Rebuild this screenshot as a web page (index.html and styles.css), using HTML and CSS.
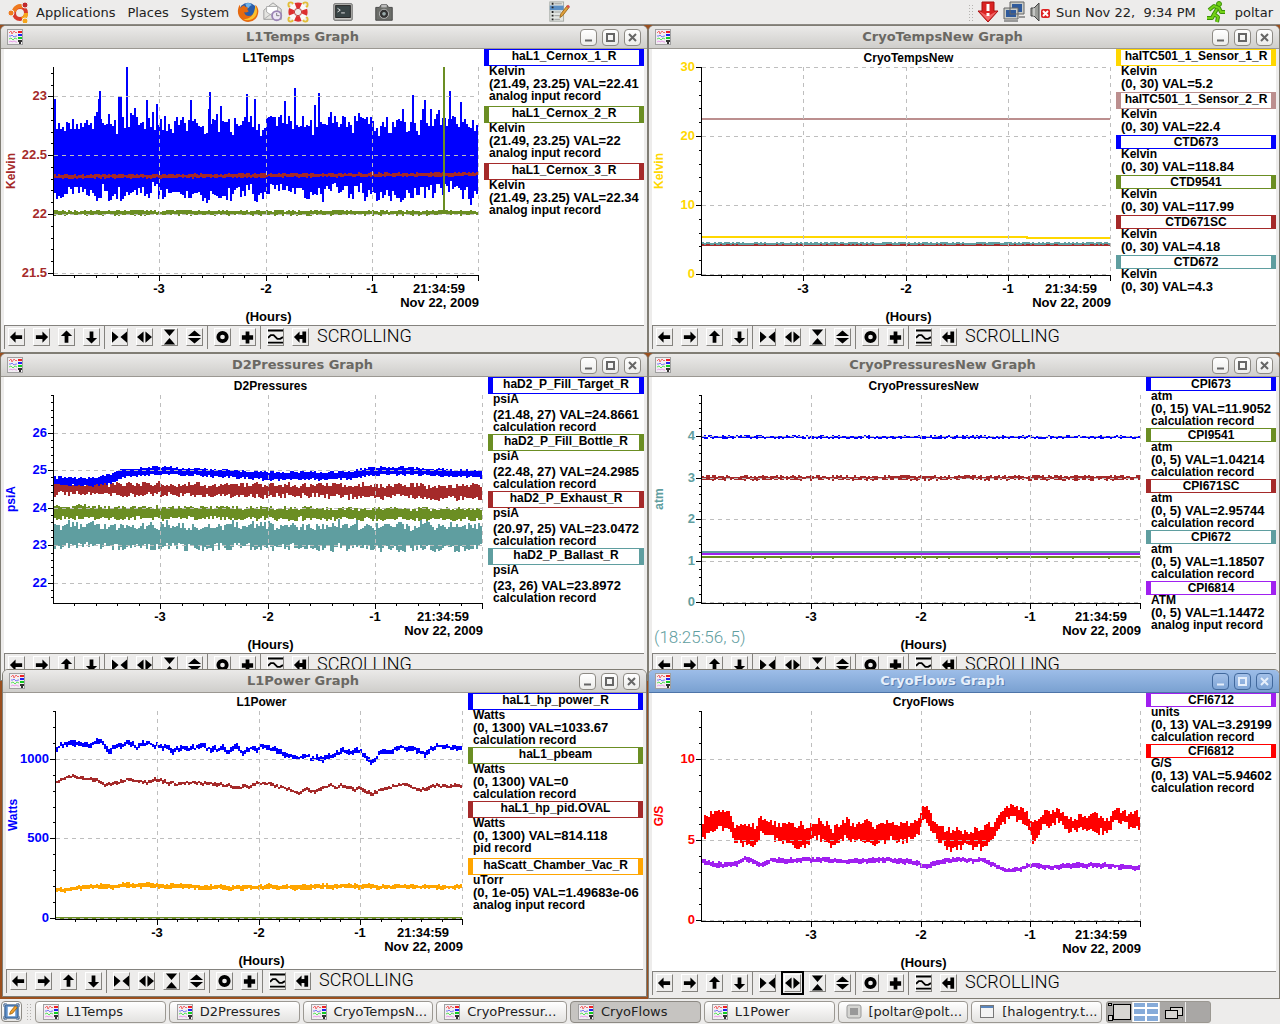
FILE: index.html
```html
<!DOCTYPE html>
<html lang="en">
<head>
    <meta charset="UTF-8">
    <meta name="viewport" content="width=device-width, initial-scale=1.0">
    <title>poltar desktop</title>
    <link rel="stylesheet" href="styles.css">
</head>
<body>

    <!-- shared icons -->
    <svg class="sprites" aria-hidden="true">
        <symbol id="i-app" viewBox="0 0 16 16">
            <rect x=".5" y=".5" width="15" height="15" fill="#f2eef2" stroke="#a0a0a0"/>
            <path d="M2 4l2-2 1 3 2-3 2 2 1-1" fill="none" stroke="#f46a6a"/>
            <path d="M2 7h2l1-1 2 2 2-1h1" fill="none" stroke="#7a7af5"/>
            <path d="M2 10l2-1 2 2 2-2 2 1" fill="none" stroke="#5de65d"/>
            <path d="M2 13l2-1 1 1 2-1 2 1h1" fill="none" stroke="#e9a0e9"/>
            <path d="M11 2h4v2h-4z" fill="#e22"/>
            <path d="M11 5h4v2h-4z" fill="#22e"/>
            <path d="M11 8h4v2h-4z" fill="#1c2"/>
            <path d="M11 11h4v2h-1v2h-2v-2h-1z" fill="#333"/>
        </symbol>
        <symbol id="i-left" viewBox="0 0 16 16"><path d="M1 8l6-6v4h7v4H7v4z"/></symbol>
        <symbol id="i-right" viewBox="0 0 16 16"><path d="M15 8L9 2v4H2v4h7v4z"/></symbol>
        <symbol id="i-up" viewBox="0 0 16 16"><path d="M8 1l6 6h-4v7H6V7H2z"/></symbol>
        <symbol id="i-down" viewBox="0 0 16 16"><path d="M8 15L2 9h4V2h4v7h4z"/></symbol>
        <symbol id="i-xin" viewBox="0 0 16 16"><path d="M0 2l7 6-7 6zM16 2L9 8l7 6z"/></symbol>
        <symbol id="i-xout" viewBox="0 0 16 16"><path d="M7 2v12L0 8zM9 2v12l7-6z"/></symbol>
        <symbol id="i-yin" viewBox="0 0 16 16"><path d="M2 0h12L8 7zM2 16h12L8 9z"/></symbol>
        <symbol id="i-yout" viewBox="0 0 16 16"><path d="M1 7h14L8 1zM1 9h14l-7 6z"/></symbol>
        <symbol id="i-ring" viewBox="0 0 16 16"><circle cx="8" cy="8" r="4.5" fill="none" stroke="#000" stroke-width="4"/></symbol>
        <symbol id="i-plus" viewBox="0 0 16 16"><path d="M6 2h4v4h4v5h-4v4H6v-4H2V6h4z"/></symbol>
        <symbol id="i-auto" viewBox="0 0 16 16"><path d="M0 0h16v2H0zM0 13h16v2H0z"/><path d="M0 9l3-3h3l4 4h3l3-2" fill="none" stroke="#000" stroke-width="2"/></symbol>
        <symbol id="i-reset" viewBox="0 0 16 16"><path d="M1 8l6-6v4h3V2h4v12h-4v-4H7v4z"/><path d="M7 6h4v4H7z"/></symbol>
    </svg>

    <header class="panel panel-top">
        <svg class="pic logo" viewBox="0 0 22 22">
            <circle cx="12" cy="12" r="6" fill="none" stroke="#d8392b" stroke-width="4"/>
            <path d="M6 11a6 6 0 0 1 9-5" fill="none" stroke="#ef7a1e" stroke-width="4"/>
            <path d="M18 12a6 6 0 0 1-4 6" fill="none" stroke="#f6a61c" stroke-width="4"/>
            <g stroke="#edeceb"><circle cx="3" cy="12" r="3" fill="#ef7a1e"/><circle cx="17" cy="4" r="3" fill="#c0282d"/><circle cx="17" cy="20" r="3" fill="#f6a61c"/></g>
        </svg>
        <nav class="menu">
            <button>Applications</button>
            <button>Places</button>
            <button>System</button>
        </nav>
        <div class="launchers">
            <svg class="pic" viewBox="0 0 24 24">
                <circle cx="12" cy="12" r="10" fill="#2a5ca8"/>
                <path d="M9 3c4-2 7 0 7 2-3 0-2 3-5 3z" fill="#6fb3ea"/>
                <path d="M3 4C0 9 0 16 5 20c5 5 14 3 17-3 2-5 2-9-2-13 1 5 1 9-3 11-4 3-9 1-9-3 2 1 4 0 5-1-2-1-2-2-1-4-2 0-3 0-4-2C6 5 5 6 4 8z" fill="#e66a10"/>
                <path d="M20 5c3 5 2 10-1 13-3 3-8 4-12 2 7 0 12-4 13-15z" fill="#fbc02d"/>
            </svg>
            <svg class="pic" viewBox="0 0 24 24">
                <path d="M2 10L12 2l9 7v11H2z" fill="#e4e4e1" stroke="#999"/>
                <path d="M5 6h12v7l-6 3-6-4z" fill="#fff" stroke="#aaa"/>
                <path d="M2 20l8-6 11 6" fill="none" stroke="#aaa"/>
                <circle cx="16" cy="16" r="5" fill="#eee8f5" stroke="#9b85b5" stroke-width="2"/>
                <path d="M16 13v3h3" fill="none" stroke="#777"/>
            </svg>
            <svg class="pic" viewBox="0 0 24 24">
                <g fill="none" stroke="#e2bd38" stroke-width="2"><circle cx="4" cy="4" r="2.5"/><circle cx="20" cy="4" r="2.5"/><circle cx="4" cy="20" r="2.5"/><circle cx="20" cy="20" r="2.5"/></g>
                <circle cx="12" cy="12" r="7.5" fill="none" stroke="#fafafa" stroke-width="6"/>
                <circle cx="12" cy="12" r="7.5" fill="none" stroke="#dd3030" stroke-width="6" stroke-dasharray="6 5.8" stroke-dashoffset="3"/>
                <circle cx="12" cy="12" r="4" fill="#edeceb" stroke="#b33"/>
            </svg>
            <svg class="pic terminal" viewBox="0 0 24 24">
                <rect x="2" y="3" width="20" height="18" rx="1" fill="#c8c8c4" stroke="#555"/>
                <rect x="4" y="5" width="16" height="13" fill="#3a4546" stroke="#222"/>
                <path d="M6 8l3 2-3 2M10 13h4" fill="none" stroke="#eee"/>
            </svg>
            <svg class="pic camera" viewBox="0 0 24 24">
                <path d="M3 7h4l2-3h6l2 3h4v14H3z" fill="#6b6d69" stroke="#444"/>
                <path d="M9 4h6v3H9z" fill="#bbb"/>
                <circle cx="12" cy="14" r="5" fill="#333" stroke="#bbb"/>
                <circle cx="12" cy="14" r="2" fill="#9aa"/>
            </svg>
            <svg class="pic notes" viewBox="0 0 24 24">
                <rect x="2" y="1" width="15" height="21" fill="#e2e5e2" stroke="#a3a8a3"/>
                <path d="M2 5h15v5H2z" fill="#5c8fc4"/>
                <path d="M4 3h2M4 7h2M4 12h2M4 16h2M4 20h2" stroke="#222" stroke-width="2"/>
                <path d="M7 3h8M7 12h7M7 16h6M7 20h6" stroke="#999"/>
                <path d="M13 18l1-4 7-9 2 2-7 9z" fill="#e0a03c" stroke="#9a6a20"/>
                <path d="M20 6l2-2 2 2-2 2z" fill="#d9534f"/>
            </svg>
        </div>
        <div class="tray">
            <span class="grip"></span>
            <svg class="pic" viewBox="0 0 22 22">
                <path d="M5 1h12v9h4L11 21 1 10h4z" fill="#d92323" stroke="#a11"/>
                <path d="M2 10l9 10 9-10-9 5z" fill="#f26565"/>
                <path d="M11 3v7M11 12v3" stroke="#fff" stroke-width="3"/>
            </svg>
            <svg class="pic" viewBox="0 0 22 22">
                <g fill="#2f5a9c" stroke="#c9ccc8" stroke-width="2"><rect x="8" y="2" width="12" height="10"/><rect x="2" y="8" width="12" height="9"/></g>
                <path d="M7 1h14v12H7zM1 7h14v11H1z" fill="none" stroke="#666"/>
                <path d="M1 20h14M16 16h6" stroke="#999" stroke-width="2"/>
            </svg>
            <svg class="pic speaker" viewBox="0 0 22 22">
                <path d="M2 7h3l5-5v18l-5-5H2z" fill="#9b9d99" stroke="#444"/>
                <path d="M5 7v8" stroke="#eee"/>
                <rect x="12" y="8" width="9" height="9" rx="2" fill="#d22"/>
                <path d="M14 10l5 5M19 10l-5 5" stroke="#fff" stroke-width="2"/>
            </svg>
            <time class="clock">Sun Nov 22,&nbsp; 9:34 PM</time>
            <svg class="pic runner" viewBox="0 0 22 22">
                <circle cx="14" cy="3" r="2.5" fill="#73d216" stroke="#3c8f0a"/>
                <path d="M4 9l5-4 5 2 2 4h4M12 8l-3 5 4 3-1 5M9 13l-2 4H2" fill="none" stroke="#3c8f0a" stroke-width="4" stroke-linejoin="round"/>
                <path d="M4 9l5-4 5 2 2 4h4M12 8l-3 5 4 3-1 5M9 13l-2 4H2" fill="none" stroke="#73d216" stroke-width="2"/>
            </svg>
            <span class="user">poltar</span>
        </div>
    </header>

    <main class="desktop">

        <section class="window w-l1temps">
            <div class="titlebar"><h2>L1Temps Graph</h2></div>
            <div class="content">
                <div class="chart" data-chart="l1temps"></div>
                <div class="legend">
                    <div class="entry blue"><h3>haL1_Cernox_1_R</h3><p>Kelvin</p><p class="value">(21.49, 23.25) VAL=22.41</p><p class="record deep">analog input record</p></div>
                    <div class="entry olive"><h3>haL1_Cernox_2_R</h3><p>Kelvin</p><p class="value">(21.49, 23.25) VAL=22</p><p class="record deep">analog input record</p></div>
                    <div class="entry brown"><h3>haL1_Cernox_3_R</h3><p>Kelvin</p><p class="value">(21.49, 23.25) VAL=22.34</p><p class="record deep">analog input record</p></div>
                </div>
            </div>
        </section>

        <section class="window right w-cryotemps">
            <div class="titlebar"><h2>CryoTempsNew Graph</h2></div>
            <div class="content">
                <div class="chart" data-chart="cryotemps"></div>
                <div class="legend">
                    <div class="entry gold"><h3>haITC501_1_Sensor_1_R</h3><p>Kelvin</p><p class="value">(0, 30) VAL=5.2</p></div>
                    <div class="entry rosy"><h3>haITC501_1_Sensor_2_R</h3><p>Kelvin</p><p class="value">(0, 30) VAL=22.4</p></div>
                    <div class="entry blue short"><h3>CTD673</h3><p>Kelvin</p><p class="value">(0, 30) VAL=118.84</p></div>
                    <div class="entry olive short"><h3>CTD9541</h3><p>Kelvin</p><p class="value">(0, 30) VAL=117.99</p></div>
                    <div class="entry brown short"><h3>CTD671SC</h3><p>Kelvin</p><p class="value">(0, 30) VAL=4.18</p></div>
                    <div class="entry cadet short"><h3>CTD672</h3><p>Kelvin</p><p class="value">(0, 30) VAL=4.3</p></div>
                </div>
            </div>
        </section>

        <section class="window row2 w-d2">
            <div class="titlebar"><h2>D2Pressures Graph</h2></div>
            <div class="content">
                <div class="chart" data-chart="d2"></div>
                <div class="legend">
                    <div class="entry blue"><h3>haD2_P_Fill_Target_R</h3><p class="deep">psiA</p><p class="value">(21.48, 27) VAL=24.8661</p><p class="record">calculation record</p></div>
                    <div class="entry olive"><h3>haD2_P_Fill_Bottle_R</h3><p class="deep">psiA</p><p class="value">(22.48, 27) VAL=24.2985</p><p class="record">calculation record</p></div>
                    <div class="entry brown"><h3>haD2_P_Exhaust_R</h3><p class="deep">psiA</p><p class="value">(20.97, 25) VAL=23.0472</p><p class="record">calculation record</p></div>
                    <div class="entry cadet"><h3>haD2_P_Ballast_R</h3><p class="deep">psiA</p><p class="value">(23, 26) VAL=23.8972</p><p class="record">calculation record</p></div>
                </div>
            </div>
        </section>

        <section class="window right row2 w-cryopress">
            <div class="titlebar"><h2>CryoPressuresNew Graph</h2></div>
            <div class="content">
                <div class="chart" data-chart="cryopress"><span class="cursor-pos">(18:25:56, 5)</span></div>
                <div class="legend">
                    <div class="entry blue short"><h3>CPI673</h3><p>atm</p><p class="value">(0, 15) VAL=11.9052</p><p class="record">calculation record</p></div>
                    <div class="entry olive short"><h3>CPI9541</h3><p>atm</p><p class="value">(0, 5) VAL=1.04214</p><p class="record">calculation record</p></div>
                    <div class="entry brown short"><h3>CPI671SC</h3><p>atm</p><p class="value">(0, 5) VAL=2.95744</p><p class="record">calculation record</p></div>
                    <div class="entry cadet short"><h3>CPI672</h3><p>atm</p><p class="value">(0, 5) VAL=1.18507</p><p class="record">calculation record</p></div>
                    <div class="entry purple short"><h3>CPI6814</h3><p>ATM</p><p class="value">(0, 5) VAL=1.14472</p><p class="record">analog input record</p></div>
                </div>
            </div>
        </section>

        <section class="window row3 w-l1power">
            <div class="titlebar"><h2>L1Power Graph</h2></div>
            <div class="content">
                <div class="chart" data-chart="l1power"></div>
                <div class="legend">
                    <div class="entry blue"><h3>haL1_hp_power_R</h3><p>Watts</p><p class="value">(0, 1300) VAL=1033.67</p><p class="record">calculation record</p></div>
                    <div class="entry olive"><h3>haL1_pbeam</h3><p>Watts</p><p class="value">(0, 1300) VAL=0</p><p class="record">calculation record</p></div>
                    <div class="entry brown"><h3>haL1_hp_pid.OVAL</h3><p>Watts</p><p class="value">(0, 1300) VAL=814.118</p><p class="record deep">pid record</p></div>
                    <div class="entry orange"><h3>haScatt_Chamber_Vac_R</h3><p>uTorr</p><p class="value">(0, 1e-05) VAL=1.49683e-06</p><p class="record">analog input record</p></div>
                </div>
            </div>
        </section>

        <section class="window right row3 active w-cryoflows">
            <div class="titlebar"><h2>CryoFlows Graph</h2></div>
            <div class="content">
                <div class="chart" data-chart="cryoflows"></div>
                <div class="legend">
                    <div class="entry purple short"><h3>CFI6712</h3><p>units</p><p class="value">(0, 13) VAL=3.29199</p><p class="record">calculation record</p></div>
                    <div class="entry red short"><h3>CFI6812</h3><p>G/S</p><p class="value">(0, 13) VAL=5.94602</p><p class="record">calculation record</p></div>
                </div>
            </div>
        </section>

    </main>

    <footer class="panel panel-bottom">
        <button class="show-desktop" aria-label="Show desktop">
            <svg viewBox="0 0 18 18"><rect x="2" y="2" width="14" height="14" rx="2" fill="#5d8fc9" stroke="#234d80"/><rect x="5" y="4" width="8" height="10" fill="#fff"/><path d="M7 12l1-3 5-6 2 2-5 6z" fill="#f0a030" stroke="#a66a10"/><path d="M1 4V1h3M14 1h3v3M1 14v3h3M14 17h3v-3" fill="none" stroke="#234d80"/></svg>
        </button>
        <span class="grip"></span>
        <div class="tasks">
            <button><svg><use href="#i-app"/></svg>L1Temps</button>
            <button><svg><use href="#i-app"/></svg>D2Pressures</button>
            <button><svg><use href="#i-app"/></svg>CryoTempsN...</button>
            <button><svg><use href="#i-app"/></svg>CryoPressur...</button>
            <button class="current"><svg><use href="#i-app"/></svg>CryoFlows</button>
            <button><svg><use href="#i-app"/></svg>L1Power</button>
            <button><svg viewBox="0 0 16 16"><rect x="1" y="1" width="14" height="13" rx="2" fill="#d5d5d2" stroke="#999"/><rect x="4" y="4" width="8" height="7" fill="#999"/></svg>[poltar@polt...</button>
            <button><svg viewBox="0 0 16 16"><rect x="1.5" y="1.5" width="13" height="12" fill="#f4f4f4" stroke="#777"/><path d="M2 2h12v2H2z" fill="#5a86bd"/></svg>[halogentry.t...</button>
        </div>
        <div class="workspaces">
            <div class="space"><i class="mini a"></i><i class="mini b"></i><i class="mini c"></i></div>
            <div class="space current"><i></i><i></i><i></i><i></i><i></i><i></i></div>
            <div class="space"><i class="mini d"></i><i class="mini e"></i></div>
            <div class="space"></div>
        </div>
    </footer>

    <script src="charts.js"></script>
</body>
</html>
```
FILE: styles.css
```css
* {
    box-sizing: border-box;
}
body {
    margin: 0;
    height: 100vh;
    display: flex;
    flex-direction: column;
    overflow: hidden;
    font-family: "DejaVu Sans", sans-serif;
    font-size: 13px;
    color: #222;
    background: #9a4f1e;
}
h2, h3, p {
    margin: 0;
}
button {
    font: inherit;
    color: inherit;
    padding: 0;
    border: 0;
    background: none;
}
.sprites {
    position: absolute;
    width: 0;
    height: 0;
}

/* panels */
.panel {
    display: flex;
    align-items: center;
    height: 25px;
    flex: none;
    background: #edeceb;
}
.panel-top {
    border-bottom: 1px solid #8d8a84;
    padding: 0 7px 0 8px;
}
.pic {
    width: 22px;
    height: 22px;
    flex: none;
}
.menu {
    display: flex;
    gap: 12px;
    margin: 0 8px 0 6px;
}
.launchers {
    display: flex;
    gap: 3px;
}
.terminal {
    margin-left: 20px;
}
.camera {
    margin-left: 16px;
}
.notes {
    margin-left: 150px;
}
.tray {
    display: flex;
    align-items: center;
    gap: 4px;
    margin-left: auto;
    white-space: nowrap;
}
.grip {
    width: 5px;
    height: 17px;
    background-image: radial-gradient(#b5b3b0 1px, transparent 1px);
    background-size: 3px 3px;
}
.clock {
    margin: 0 5px 0 1px;
}
.runner {
    margin-right: 4px;
}

/* desktop and windows */
.desktop {
    position: relative;
    flex: 1;
    background: #9a4f1e;
}
.window {
    position: absolute;
    left: 0;
    top: 0;
    width: calc(50% + 8px);
    border: 1px solid #807d74;
    border-radius: 6px 6px 0 0;
    background: #edeceb;
    overflow: hidden;
}
.window.right {
    left: calc(50% + 8px);
    width: calc(50% - 8px);
}
.window.row2 {
    top: 328px;
}
.window.row3 {
    top: 644px;
}
.w-l1power {
    left: 2px;
    width: calc(50% + 5px);
}
.titlebar {
    display: flex;
    align-items: center;
    gap: 7px;
    height: 23px;
    padding: 0 6px;
    border-bottom: 1px solid #9b9892;
    background: linear-gradient(#ebeae9, #cfcecb);
}
.titlebar h2 {
    flex: 1;
    text-align: center;
    font-size: 13px;
    line-height: 22px;
    color: #6a6863;
}
.titlebar svg {
    width: 16px;
    height: 16px;
    flex: none;
}
.titlebar button {
    width: 17px;
    height: 17px;
    margin-left: -2px;
    border: 1px solid #8d8a84;
    border-radius: 4px;
    background: linear-gradient(#fff, #ececea);
    color: #666;
}
.titlebar button svg {
    display: block;
    width: 15px;
    height: 15px;
}
.active .titlebar {
    border-color: #4d74a8;
    background: linear-gradient(#9dbde8, #7aa1d1);
}
.active .titlebar h2 {
    color: #e6effb;
    text-shadow: 1px 1px 0 #5a80b3;
}
.active .titlebar button {
    border-color: #41689c;
    background: linear-gradient(#a3c0e8, #7fa5d6);
    color: #e6effb;
}
.content {
    display: flex;
    margin: 0 3px;
    background: #fff;
}
.chart {
    position: relative;
    flex: 1;
    min-width: 0;
    height: 276px;
}
.w-cryoflows .chart {
    height: 278px;
}
.chart svg {
    display: block;
    width: 100%;
    height: 100%;
}
.chart text {
    font: bold 12px "Liberation Sans", Arial, sans-serif;
}
.chart text.num {
    font-size: 13px;
}
.cursor-pos {
    position: absolute;
    left: 2px;
    bottom: 6px;
    font: 300 17px/20px Roboto, "Liberation Sans", sans-serif;
    color: #5f9ea0;
}

/* legends */
.legend {
    width: 160px;
    flex: none;
    font: bold 12px "Liberation Sans", Arial, sans-serif;
    color: #000;
    white-space: nowrap;
}
.w-d2 .legend {
    width: 156px;
}
.w-cryopress .legend,
.w-cryoflows .legend {
    width: 130px;
}
.w-l1power .legend {
    width: 175px;
}
.entry h3 {
    height: 17px;
    border: solid;
    border-width: 1px 5px;
    font-size: 12px;
    line-height: 13px;
    text-align: center;
}
.entry.short h3 {
    height: 14px;
    line-height: 12px;
}
.entry p {
    padding-left: 5px;
    line-height: 11px;
}
.entry .value {
    font-size: 13px;
    line-height: 13px;
}
.entry .value:last-child {
    padding-bottom: 2px;
}
.entry .record {
    line-height: 13px;
}
.entry .deep {
    padding-bottom: 3px;
}
.blue h3 { border-color: #0000ff; }
.olive h3 { border-color: #6b8e23; }
.brown h3 { border-color: #a52a2a; }
.gold h3 { border-color: #ffd700; }
.rosy h3 { border-color: #bc8f8f; }
.cadet h3 { border-color: #5f9ea0; }
.purple h3 { border-color: #a020f0; }
.orange h3 { border-color: #ffa500; }
.red h3 { border-color: #ff0000; }

/* graph toolbar */
.toolbar {
    display: flex;
    height: 24px;
    margin: 0 3px 3px;
    border: solid #84827e;
    border-width: 1px 0 0 1px;
}
.toolbar .group {
    display: flex;
    gap: 8px;
    padding: 2px 4px 0 6px;
    border-right: 1px solid #84827e;
}
.toolbar .group:first-child {
    padding-left: 3px;
}
.toolbar .group:last-of-type {
    border-right: 0;
}
.toolbar button {
    width: 17px;
    height: 18px;
    border: solid;
    border-width: 1px;
    border-color: #fff #84827e #84827e #fff;
}
.toolbar button svg {
    display: block;
    width: 15px;
    height: 16px;
}
.active .toolbar button[aria-label="Expand X"] {
    outline: 2px solid #000;
    outline-offset: 1px;
}
.toolbar .status {
    padding-left: 4px;
    font: 300 18px/20px Roboto, "Liberation Sans", sans-serif;
    color: #000;
}

/* bottom panel */
.panel-bottom {
    gap: 4px;
    padding-left: 1px;
}
.show-desktop {
    width: 21px;
    height: 21px;
    flex: none;
    border: 1px solid #8d8a84;
    border-radius: 4px;
    background: linear-gradient(#fff, #e6e5e3);
}
.show-desktop svg {
    display: block;
    width: 17px;
    height: 17px;
    margin: 1px;
}
.tasks {
    display: flex;
    gap: 3px;
    flex: 0 1 1067px;
    min-width: 0;
}
.tasks button {
    display: flex;
    align-items: center;
    gap: 7px;
    flex: 1 1 0;
    min-width: 0;
    height: 22px;
    padding-left: 7px;
    border: 1px solid #9b9892;
    border-radius: 4px;
    background: linear-gradient(#fff, #e3e2e0);
    white-space: nowrap;
    overflow: hidden;
}
.tasks button.current {
    background: #c6c4c1;
    border-color: #8d8a84;
}
.tasks svg {
    width: 16px;
    height: 16px;
    flex: none;
}
.workspaces {
    display: flex;
    width: 105px;
    height: 22px;
    background: #a9a7a5;
    border: 1px solid #9b9892;
    border-radius: 3px;
}
.space {
    position: relative;
    flex: 1;
    border-right: 1px solid #edeceb;
}
.space:last-child {
    border: 0;
}
.space.current {
    display: grid;
    grid-template-columns: 1fr 1fr;
    gap: 2px;
    padding: 1px;
    background: #fff;
}
.space.current i {
    background: #86abd9;
}
.mini {
    position: absolute;
    border: 1px solid #000;
    background: #d8d6d3;
}
.mini.a { left: 6px; top: 2px; width: 18px; height: 16px; }
.mini.b { left: 1px; top: 1px; width: 4px; height: 3px; }
.mini.c { left: 1px; top: 13px; width: 5px; height: 6px; }
.mini.d { left: 10px; top: 5px; width: 13px; height: 9px; }
.mini.e { left: 5px; top: 8px; width: 13px; height: 9px; }
```
FILE: charts.js
```js
// series points are [percent of the time axis, high, low]
const flat = (hi, lo) => [[0, hi, lo], [100, hi, lo]];

const charts = {
    l1temps: {
        title: 'L1Temps', unit: 'Kelvin', color: '#a52a2a',
        min: 21.49, max: 23.25, major: [21.5, 22, 22.5, 23], minor: 0.1,
        series: [
            { color: '#0000ff', points: flat(22.7, 22.24), noise: 0.12, spike: 0.27, wander: 0.06 },
            { color: '#0000ff', bar: 17.5, from: 23.25, to: 22.4 },
            { color: '#0000ff', bar: 11, from: 23.05, to: 22.4 },
            { color: '#0000ff', bar: 37, from: 23.04, to: 22.4 },
            { color: '#0000ff', bar: 57, from: 23.07, to: 22.4 },
            { color: '#0000ff', bar: 93.5, from: 23.05, to: 22.4 },
            { color: '#a52a2a', points: [[0, 22.325, 22.31], [100, 22.345, 22.33]], noise: 0.015 },
            { color: '#6b8e23', points: flat(22.02, 22), noise: 0.015 },
            { color: '#6b8e23', bar: 92, from: 23.25, to: 22 }
        ]
    },
    cryotemps: {
        title: 'CryoTempsNew', unit: 'Kelvin', color: '#ffd700',
        min: 0, max: 30, major: [0, 10, 20, 30], minor: 2,
        series: [
            { color: '#bc8f8f', points: flat(22.65, 22.4) },
            { color: '#ffd700', points: [[0, 5.5, 5.25], [79, 5.5, 5.25], [80, 5.4, 5.1], [100, 5.4, 5.1]], noise: 0.02 },
            { color: '#a52a2a', points: flat(4.35, 4.15) },
            { color: '#5f9ea0', points: flat(4.5, 4.35), noise: 0.15 }
        ]
    },
    d2: {
        title: 'D2Pressures', unit: 'psiA', color: '#0000ff',
        min: 21.48, max: 27, major: [22, 23, 24, 25, 26], minor: 0.2,
        series: [
            { color: '#a52a2a', points: [[0, 24.57, 24.42], [60, 24.54, 24.37], [100, 24.5, 24.3]], noise: 0.13, wander: 0.04 },
            { color: '#0000ff', points: [[0, 24.77, 24.65], [10, 24.75, 24.62], [14, 24.87, 24.7], [16, 25, 24.85], [25, 25.04, 24.92], [34, 25, 24.88], [50, 24.92, 24.78], [62, 24.9, 24.78], [69, 24.92, 24.8], [74, 25.04, 24.9], [83, 25.04, 24.92], [100, 24.94, 24.82]], noise: 0.07 },
            { color: '#6b8e23', points: [[0, 23.98, 23.78], [100, 23.9, 23.73]], noise: 0.11, wander: 0.03 },
            { color: '#5f9ea0', points: [[0, 23.4, 23.08], [100, 23.4, 23]], noise: 0.2, spike: 0.1, wander: 0.05 }
        ]
    },
    cryopress: {
        title: 'CryoPressuresNew', unit: 'atm', color: '#5f9ea0',
        min: 0, max: 5, major: [0, 1, 2, 3, 4], minor: 0.2,
        series: [
            { color: '#0000ff', points: flat(3.99, 3.98), noise: 0.04 },
            { color: '#a52a2a', points: flat(3.02, 2.98), noise: 0.05 },
            { color: '#6b8e23', points: flat(1.1, 1.06), noise: 0.01 },
            { color: '#a020f0', points: flat(1.18, 1.14) },
            { color: '#5f9ea0', points: flat(1.23, 1.19), noise: 0.01 }
        ]
    },
    l1power: {
        title: 'L1Power', unit: 'Watts', color: '#0000ff',
        min: 0, max: 1300, major: [0, 500, 1000], minor: 100,
        series: [
            { color: '#6b8e23', points: flat(6, 0) },
            { color: '#0000ff', points: [[0, 1070, 1060], [5, 1120, 1100], [8, 1090, 1075], [11, 1105, 1090], [14, 1070, 1060], [18, 1110, 1095], [22, 1080, 1070], [26, 1090, 1080], [29, 1065, 1050], [34, 1070, 1060], [38, 1055, 1045], [43, 1050, 1035], [48, 1060, 1050], [51, 1090, 1080], [55, 1050, 1035], [58, 1025, 1015], [62, 1000, 990], [68, 1020, 1005], [72, 1060, 1050], [74, 1055, 1040], [76, 1030, 1015], [78, 990, 970], [80, 1040, 1030], [84, 1065, 1055], [87, 1075, 1065], [91, 1045, 1030], [94, 1070, 1060], [97, 1065, 1055], [100, 1040, 1025]], noise: 14, wander: 28 },
            { color: '#a52a2a', points: [[0, 860, 850], [5, 890, 880], [10, 865, 855], [14, 850, 840], [18, 880, 870], [22, 855, 845], [26, 880, 870], [30, 840, 830], [34, 865, 855], [39, 845, 835], [43, 830, 820], [47, 840, 830], [52, 860, 850], [56, 820, 810], [60, 795, 785], [66, 820, 810], [70, 840, 830], [75, 815, 805], [78, 790, 775], [81, 830, 820], [85, 855, 845], [90, 825, 815], [95, 840, 830], [100, 820, 810]], noise: 8, wander: 20 },
            { color: '#ffa500', points: [[0, 180, 170], [8, 200, 185], [18, 215, 200], [40, 200, 185], [70, 205, 190], [100, 200, 190]], noise: 12, wander: 6 }
        ]
    },
    cryoflows: {
        title: 'CryoFlows', unit: 'G/S', color: '#ff0000',
        min: 0, max: 13, major: [0, 5, 10], minor: 1,
        series: [
            { color: '#ff0000', points: [[0, 5.8, 5.2], [2, 6.5, 5.7], [4, 6.6, 5.9], [6, 6.4, 5.8], [8, 5.7, 5.2], [10, 5.7, 4.9], [12, 5.7, 5], [14, 6.1, 5.6], [16, 5.8, 5.3], [19, 5.8, 5], [21, 5.9, 4.9], [23, 5.8, 4.9], [25, 5.7, 5.1], [27, 5.9, 5.4], [30, 5.5, 4.9], [33, 6, 5.4], [35, 5.8, 5.2], [38, 5.8, 5.1], [42, 5.8, 5.1], [46, 5.7, 5.1], [49, 5.8, 5.3], [51, 6.9, 6.4], [54, 5.7, 5.3], [57, 5.4, 4.6], [60, 5.4, 4.9], [64, 5.5, 4.7], [67, 5.9, 5.4], [69, 6.7, 6.3], [71, 6.9, 6.6], [74, 6.4, 6.1], [75.5, 6, 5.1], [78, 6.5, 6.1], [81, 6.8, 6.4], [84, 6.3, 5.9], [87, 6.1, 5.8], [90, 6.4, 5.7], [93, 6, 5.7], [95, 6.7, 6.4], [97, 6.4, 6.1], [100, 6.3, 5.8]], noise: 0.4, wander: 0.2, spike: 0.2 },
            { color: '#a020f0', points: [[0, 3.8, 3.6], [4, 3.5, 3.3], [8, 3.6, 3.4], [10, 3.85, 3.7], [14, 3.5, 3.3], [16, 3.85, 3.7], [20, 3.8, 3.6], [30, 3.8, 3.65], [40, 3.75, 3.55], [47, 3.8, 3.6], [51, 3.4, 3.2], [56, 3.8, 3.6], [60, 3.8, 3.65], [64, 3.75, 3.6], [67, 3.55, 3.4], [69, 3.15, 3], [73, 3.3, 3.2], [75, 3.5, 3.3], [80, 3.35, 3.2], [86, 3.5, 3.3], [93, 3.45, 3.3], [100, 3.4, 3.2]], noise: 0.1, wander: 0.1 }
        ]
    }
};

// fixed seed so that the traces look the same on each load
let seed = 7;
function rand() {
    seed = (seed * 16807) % 2147483647;
    return seed / 2147483647;
}

function interp(points, p) {
    let i = 1;
    while (i < points.length - 1 && points[i][0] < p) i++;
    const a = points[i - 1], b = points[i];
    const t = (p - a[0]) / (b[0] - a[0]);
    return [a[1] + (b[1] - a[1]) * t, a[2] + (b[2] - a[2]) * t];
}

function drawChart(el, c) {
    const w = el.clientWidth, h = el.clientHeight;
    const x0 = 49, x1 = w - 6, y0 = 18, y1 = h - 50;
    const X = p => Math.round(x0 + (x1 - x0) * p / 100);
    const Y = v => Math.round(y1 - 1 - (v - c.min) / (c.max - c.min) * (y1 - 1 - y0));
    const mid = (x0 + x1) / 2 + 3;
    let out = '';

    c.series.forEach(s => {
        let d = '';
        if (s.bar) {
            d = `M${X(s.bar)} ${Y(s.from)}V${Y(s.to)}`;
        } else {
            const n = s.noise || 0;
            let drift = 0;
            for (let x = x0 + 2; x <= x1; x += 2) {
                let [hi, lo] = interp(s.points, (x - x0) / (x1 - x0) * 100);
                drift = drift * 0.7 + (rand() - 0.5) * (s.wander || 0);
                hi += n * rand() + drift;
                lo -= n * rand() - drift;
                if (s.spike && rand() < 0.25) hi += s.spike * rand();
                d += `M${x} ${Y(hi)}V${Math.max(Y(lo), Y(hi) + 2)}`;
            }
        }
        out += `<path d="${d}" stroke="${s.color}" stroke-width="2"/>`;
    });

    let grid = '', axis = `M${x0 + .5} ${y0}V${y1 + .5}H${x1 + .5}`;
    c.major.forEach(v => {
        grid += `M${x0 + 1} ${Y(v) + .5}H${x1}`;
        axis += `M${x0 - 5} ${Y(v) + .5}h5`;
        out += `<text class="num" x="${x0 - 6}" y="${Y(v) + 4}" text-anchor="end" fill="${c.color}">${v}</text>`;
    });
    for (let k = Math.ceil(c.min / c.minor); k * c.minor <= c.max; k++) {
        axis += `M${x0 - 2} ${Y(k * c.minor) + .5}h2`;
    }
    for (let k = 1; k <= 20; k++) {
        axis += `M${X(k * 5) + .5} ${y1}v${k % 5 ? 3 : 6}`;
        if (k % 5 === 0) grid += `M${X(k * 5) + .5} ${y0}V${y1}`;
    }
    out += `<path d="${grid}" stroke="#bebebe" stroke-dasharray="4 4"/><path d="${axis}" stroke="#000" fill="none"/>`;

    [-3, -2, -1].forEach((t, i) => {
        out += `<text class="num" x="${X(25 * (i + 1))}" y="${y1 + 18}" text-anchor="middle">${t}</text>`;
    });
    out += `<text x="${mid}" y="13" text-anchor="middle">${c.title}</text>
        <text class="num" x="${x1 - 13}" y="${y1 + 18}" text-anchor="end">21:34:59</text>
        <text class="num" x="${x1 + 1}" y="${y1 + 32}" text-anchor="end">Nov 22, 2009</text>
        <text class="num" x="${mid}" y="${y1 + 46}" text-anchor="middle">(Hours)</text>
        <text transform="translate(11 ${(y0 + y1) / 2}) rotate(-90)" text-anchor="middle" fill="${c.color}">${c.unit}</text>`;

    el.insertAdjacentHTML('afterbegin', `<svg shape-rendering="crispEdges">${out}</svg>`);
}

const tools = [
    [['left', 'Pan left'], ['right', 'Pan right'], ['up', 'Pan up'], ['down', 'Pan down']],
    [['xin', 'Shrink X'], ['xout', 'Expand X'], ['yin', 'Shrink Y'], ['yout', 'Expand Y']],
    [['ring', 'Zoom out'], ['plus', 'Zoom in']],
    [['auto', 'Auto scale'], ['reset', 'Reset']]
];
const toolbar = tools.map(g => '<div class="group">' + g.map(([id, label]) =>
    `<button aria-label="${label}"><svg><use href="#i-${id}"/></svg></button>`).join('') + '</div>').join('');

const winButtons = [['Minimize', 'M4 10.5h7'], ['Maximize', 'M4 4h7v7H4z'], ['Close', 'M4 4l7 7M11 4l-7 7']]
    .map(([label, d]) => `<button aria-label="${label}"><svg viewBox="0 0 15 15"><path d="${d}" fill="none" stroke="currentColor" stroke-width="2"/></svg></button>`).join('');

document.querySelectorAll('.window').forEach(win => {
    const bar = win.querySelector('.titlebar');
    bar.insertAdjacentHTML('afterbegin', '<svg><use href="#i-app"/></svg>');
    bar.insertAdjacentHTML('beforeend', winButtons);
    win.insertAdjacentHTML('beforeend', `<div class="toolbar">${toolbar}<span class="status">SCROLLING</span></div>`);
    const chart = win.querySelector('.chart');
    drawChart(chart, charts[chart.dataset.chart]);
});
```
